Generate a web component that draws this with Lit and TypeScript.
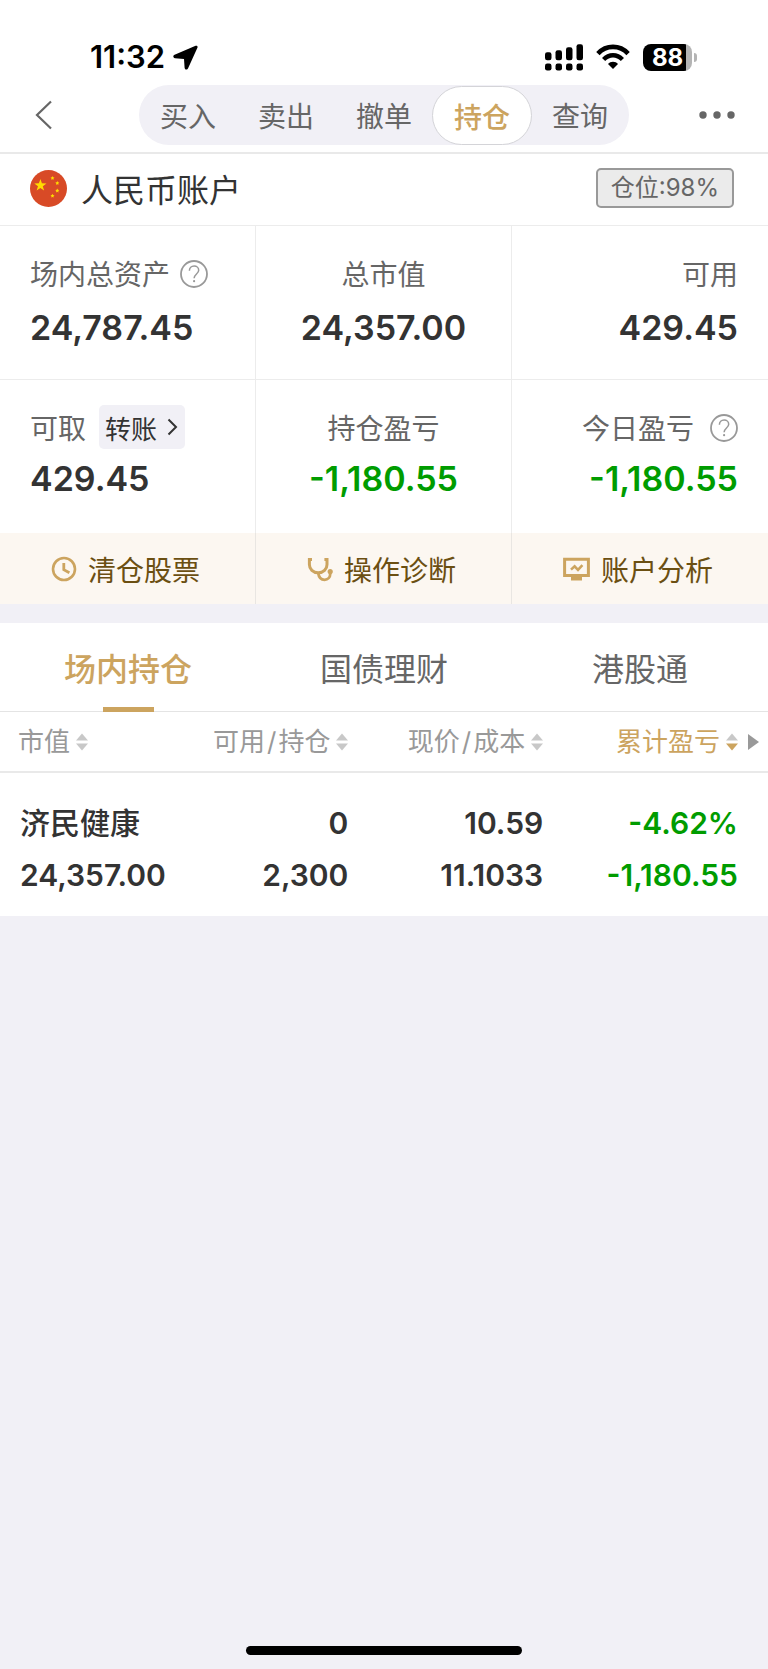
import { LitElement, html, css, svg, nothing } from "lit";
import { customElement, property, state } from "lit/decorators.js";
import { classMap } from "lit/directives/class-map.js";

const helpIcon = html`<svg class="help" width="28" height="28" viewBox="0 0 28 28" fill="none" aria-hidden="true">
  <circle cx="14" cy="14" r="13" stroke="#999" stroke-width="1.8" />
  <path d="M9.4 10.8c0-2.8 2-4.7 4.7-4.7 2.7 0 4.6 1.8 4.6 4.2 0 3.6-4.6 3.9-4.6 8" stroke="#999" stroke-width="1.5" />
  <circle cx="14.1" cy="21.2" r="1.1" fill="#999" />
</svg>`;

const clockIcon = html`<svg width="26" height="26" viewBox="0 0 26 26" fill="none" stroke="#cca45f" aria-hidden="true">
  <circle cx="13" cy="13" r="11" stroke-width="2.6" />
  <path d="M12.8 7v6.7l5.6 3" stroke-width="2.8" />
</svg>`;

const scopeIcon = html`<svg width="26" height="26" viewBox="0 0 26 26" fill="none" stroke="#cca45f" aria-hidden="true">
  <path d="M5 3.500H2.400v5c0 4.700 3.600 8.300 8.800 8.300S20 13.200 20 8.500v-5h-2.600" stroke-width="3" />
  <path d="M11.200 17c.6 4.200 3 6.800 6.400 6.800 3.300 0 5.600-2.500 5.600-5.800v-2" stroke-width="2.800" />
  <circle cx="23.200" cy="15.600" r="2.600" fill="#cca45f" stroke="none" />
</svg>`;

const screenIcon = html`<svg width="27" height="26" viewBox="0 0 27 26" fill="none" stroke="#cca45f" aria-hidden="true">
  <path d="M1.600 3.200h23.800v16.400H1.600z" stroke-width="3" />
  <path d="M8 20.500h11v4H8z" fill="#cca45f" stroke="none" />
  <path d="M8 13.600l3.600-3.200 3.400 3.400 4.400-4.600" stroke-width="2.600" />
</svg>`;

const flagIcon = html`<svg width="37" height="37" viewBox="0 0 37 37" aria-hidden="true">
  <circle cx="18.500" cy="18.500" r="18.500" fill="#d84a26" />
  <g fill="#ffdc00">
    <path d="M10.400 9l1.500 4.300 4.600.1-3.700 2.800 1.300 4.400-3.700-2.600-3.800 2.600 1.400-4.400-3.700-2.800 4.600-.1z" />
    <path d="M22.500 6l.6 1.200 1.400.2-1 1 .2 1.400-1.200-.6-1.300.6.3-1.400-1-1 1.400-.2z" />
    <path d="M27.300 11l.6 1.200 1.400.2-1 1 .2 1.400-1.200-.6-1.300.6.3-1.400-1-1 1.400-.2z" />
    <path d="M27.300 18.600l.6 1.200 1.400.2-1 1 .2 1.400-1.200-.6-1.300.6.3-1.400-1-1 1.400-.2z" />
    <path d="M22.500 23.700l.6 1.200 1.400.2-1 1 .2 1.400-1.200-.6-1.300.6.3-1.400-1-1 1.400-.2z" />
  </g>
</svg>`;

@customElement("status-bar")
export class StatusBar extends LitElement {
  static styles = css`
    :host {
      display: flex;
      justify-content: space-between;
      align-items: center;
      height: 28px;
      padding: 43px 71px 14px 90px;
      color: #000;
    }
    .side {
      display: flex;
      align-items: center;
    }
    .time {
      font-size: 31px;
      font-weight: 600;
      line-height: 28px;
      margin-right: 8px;
    }
    .signal {
      margin-right: 13px;
    }
    .wifi {
      margin-right: 13px;
    }
    .battery {
      display: flex;
      align-items: center;
      gap: 2px;
    }
    .cell {
      width: 49px;
      height: 27px;
      border-radius: 8px;
      background: linear-gradient(to right, #000 88%, #b4b4b4 88%);
      color: #fff;
      font-size: 24px;
      font-weight: 700;
      line-height: 27px;
      text-align: center;
    }
    .nub {
      width: 3px;
      height: 9px;
      border-radius: 0 4px 4px 0;
      background: #b4b4b4;
    }
  `;

  render() {
    const bars = [8, 10, 13, 16];
    return html`
      <div class="side">
        <span class="time">11:32</span>
        <svg width="25" height="25" viewBox="0 0 25 25" aria-hidden="true">
          <path d="M22.600.8 1.600 9.700C-.3 10.600 0 13 2 13.200l9 .7.600 8.800c.2 2.200 2.700 2.500 3.500.6L24.400 2.800c.6-1.400-.4-2.500-1.800-2z" />
        </svg>
      </div>
      <div class="side">
        <svg class="signal" width="38" height="27" viewBox="0 0 38 27" aria-hidden="true">
          ${bars.map(
            (h, i) => svg`<rect x=${i * 10.5} y=${16.300 - h} width="6.500" height=${h} rx="2.200" />
              <rect x=${i * 10.5} y="19.500" width="6.500" height="7" rx="2.200" />`
          )}
        </svg>
        <svg class="wifi" width="34" height="26" viewBox="0 0 34 26" fill="none" stroke="#000" aria-hidden="true">
          <path d="M1.900 9.600C6 5.200 11.300 2.900 17 2.900S28 5.200 32.100 9.600" stroke-width="4.600" />
          <path d="M7.600 15.500c2.600-2.700 5.800-4.200 9.400-4.200s6.800 1.500 9.400 4.200" stroke-width="4.400" />
          <path d="M17 25l-5-5.100c1.300-1.300 3-2.100 5-2.100s3.700.8 5 2.100z" fill="#000" stroke="none" />
        </svg>
        <div class="battery"><span class="cell">88</span><span class="nub"></span></div>
      </div>
    `;
  }
}

@customElement("sort-mark")
export class SortMark extends LitElement {
  @property() direction = "";
  static styles = css`
    :host {
      display: block;
      width: 12px;
      height: 18px;
    }
    svg {
      display: block;
    }
  `;
  render() {
    return html`<svg width="12" height="18" viewBox="0 0 12 18" aria-hidden="true">
      <path d="M6 .5 12 7.500H0z" fill="#c8c8c8" />
      <path d="M0 10.500h12L6 17.500z" fill=${this.direction === "down" ? "#cca45f" : "#c8c8c8"} />
    </svg>`;
  }
}

interface Stat {
  label: string;
  value: string;
  help?: boolean;
  transfer?: boolean;
  fall?: boolean;
}

@customElement("app-root")
export class AppRoot extends LitElement {
  @state() private mode = "持仓";
  @state() private tab = "场内持仓";

  private modes = ["买入", "卖出", "撤单", "持仓", "查询"];
  private tabs = ["场内持仓", "国债理财", "港股通"];
  private totals: Stat[] = [
    { label: "场内总资产", value: "24,787.45", help: true },
    { label: "总市值", value: "24,357.00" },
    { label: "可用", value: "429.45" },
  ];
  private gains: Stat[] = [
    { label: "可取", value: "429.45", transfer: true },
    { label: "持仓盈亏", value: "-1,180.55", fall: true },
    { label: "今日盈亏", value: "-1,180.55", help: true, fall: true },
  ];
  private actions = [
    { label: "清仓股票", icon: clockIcon },
    { label: "操作诊断", icon: scopeIcon },
    { label: "账户分析", icon: screenIcon },
  ];
  private columns = [["市值"], ["可用", "持仓"], ["现价", "成本"], ["累计盈亏"]];

  static styles = css`
    :host {
      display: flex;
      flex-direction: column;
      min-height: 100vh;
      background: #f1f0f6;
      color: #333;
      font-family: Inter, "Noto Sans CJK SC", sans-serif;
    }
    button {
      font: inherit;
      color: inherit;
      background: none;
      border: 0;
      padding: 0;
      margin: 0;
      cursor: pointer;
    }
    svg {
      display: block;
      flex: none;
    }
    header,
    section {
      background: #fff;
    }
    .nav {
      display: grid;
      grid-template-columns: 1fr auto 1fr;
      align-items: center;
      padding: 0 32px 7px;
      border-bottom: 2px solid #e9e9e9;
    }
    .more {
      justify-self: end;
    }
    .modes {
      display: flex;
      height: 60px;
      border-radius: 30px;
      background: #f1f0f6;
      color: #666;
      font-size: 28px;
    }
    .mode {
      padding: 0 21px;
    }
    .mode.on {
      margin: 1px -1px 0;
      border: 1px solid #d4d4d8;
      border-radius: 30px;
      background: #fff;
      color: #cca45f;
      font-weight: 500;
    }
    .account {
      display: flex;
      align-items: center;
      height: 68px;
      padding: 0 34px 3px 30px;
      border-bottom: 1px solid #ececec;
    }
    .account h1 {
      flex: 1;
      margin: 5px 0 0 14px;
      font-size: 32px;
      font-weight: 400;
      line-height: 40px;
    }
    .ratio {
      padding: 0 13px;
      border: 2px solid #999;
      border-radius: 5px;
      background: #ebebeb;
      color: #666;
      font-size: 24px;
      line-height: 36px;
    }
    .stats {
      display: grid;
      grid-template-columns: repeat(3, 1fr);
    }
    .stat {
      display: flex;
      flex-direction: column;
      gap: 13px;
      padding: 25px 30px 31px;
      border-right: 1px solid #ececec;
      border-bottom: 1px solid #ececec;
    }
    .gains .stat {
      gap: 10px;
      padding-bottom: 34px;
      border-bottom: 0;
    }
    .stat:nth-child(2) {
      align-items: center;
    }
    .stat:nth-child(3) {
      align-items: flex-end;
      border-right: 0;
    }
    .label {
      display: flex;
      align-items: center;
      height: 44px;
      color: #666;
      font-size: 28px;
    }
    .label .help {
      margin: 2px 0 0 10px;
    }
    .stat:nth-child(3) .label .help {
      margin-left: 16px;
    }
    .value {
      font-size: 34px;
      font-weight: 600;
      line-height: 40px;
    }
    .fall {
      color: #009c00;
    }
    .transfer {
      display: flex;
      align-items: center;
      gap: 8px;
      height: 44px;
      margin-left: 13px;
      padding: 0 6px;
      border-radius: 5px;
      background: #f1f0f6;
      color: #333;
      font-size: 26px;
    }
    .actions {
      display: grid;
      grid-template-columns: repeat(3, 1fr);
      margin-bottom: 19px;
      background: #fcf7f1;
    }
    .action {
      display: flex;
      align-items: center;
      justify-content: center;
      gap: 11px;
      height: 71px;
      padding-right: 4px;
      border-right: 1px solid #e9e6e2;
      color: #6b4f12;
      font-size: 28px;
    }
    .action:last-child {
      border-right: 0;
    }
    .tabs {
      display: grid;
      grid-template-columns: repeat(3, 1fr);
      border-bottom: 1px solid #e4e4e4;
    }
    .tab {
      display: flex;
      flex-direction: column;
      align-items: center;
      margin-bottom: -1px;
      padding-top: 10px;
      color: #666;
      font-size: 32px;
      line-height: 74px;
    }
    .tab::after {
      content: "";
      width: 51px;
      height: 5px;
    }
    .tab.on {
      color: #cca45f;
      font-weight: 500;
    }
    .tab.on::after {
      background: #cca45f;
    }
    table {
      width: 100%;
      table-layout: fixed;
      border-collapse: collapse;
      font-size: 30px;
      font-weight: 600;
      line-height: 36px;
      text-align: right;
    }
    th,
    td {
      padding: 0;
    }
    .first {
      width: 20%;
      text-align: left;
      padding-left: 20px;
      box-sizing: border-box;
    }
    th.first {
      padding-left: 18px;
    }
    .scroll {
      width: 30px;
    }
    thead th {
      height: 59px;
      border-bottom: 2px solid #e9e9e9;
      color: #999;
      font-size: 26px;
      font-weight: 400;
    }
    .sort {
      display: inline-flex;
      align-items: center;
      gap: 6px;
      vertical-align: middle;
      white-space: nowrap;
    }
    .sort.on {
      color: #cca45f;
    }
    .slash {
      padding: 0 2px;
    }
    .next {
      display: block;
      padding-left: 10px;
    }
    .upper td {
      padding-top: 32px;
      padding-bottom: 16px;
    }
    .lower td {
      padding-bottom: 23px;
    }
    .name {
      font-weight: 500;
    }
    .home {
      align-self: center;
      width: 36%;
      height: 9px;
      margin: auto 0 14px;
      border-radius: 5px;
      background: #000;
    }
  `;

  private renderStat(s: Stat) {
    return html`<div class="stat">
      <div class="label">
        ${s.label}${s.help ? helpIcon : nothing}
        ${s.transfer
          ? html`<button class="transfer">
              转账<svg width="14" height="18" viewBox="0 0 14 18" fill="none" aria-hidden="true">
                <path d="M3.500 1.500 11 9l-7.500 7.500" stroke="#333" stroke-width="2" />
              </svg>
            </button>`
          : nothing}
      </div>
      <div class=${classMap({ value: true, fall: !!s.fall })}>${s.value}</div>
    </div>`;
  }

  render() {
    return html`
      <header>
        <status-bar></status-bar>
        <nav class="nav">
          <button class="back" aria-label="返回">
            <svg width="22" height="30" viewBox="0 0 22 30" fill="none" aria-hidden="true">
              <path d="M19 1.500 5 15l14 13.500" stroke="#666" stroke-width="2.200" />
            </svg>
          </button>
          <div class="modes">
            ${this.modes.map(
              (m) => html`<button class=${classMap({ mode: true, on: m === this.mode })} @click=${() => (this.mode = m)}>${m}</button>`
            )}
          </div>
          <button class="more" aria-label="更多">
            <svg width="38" height="8" viewBox="0 0 38 8" fill="#666" aria-hidden="true">
              <circle cx="5" cy="4" r="3.700" /><circle cx="19" cy="4" r="3.700" /><circle cx="33" cy="4" r="3.700" />
            </svg>
          </button>
        </nav>
      </header>
      <section>
        <div class="account">
          ${flagIcon}
          <h1>人民币账户</h1>
          <span class="ratio">仓位:98%</span>
        </div>
        <div class="stats">${this.totals.map((s) => this.renderStat(s))}</div>
        <div class="stats gains">${this.gains.map((s) => this.renderStat(s))}</div>
      </section>
      <div class="actions">
        ${this.actions.map((a) => html`<button class="action">${a.icon}${a.label}</button>`)}
      </div>
      <section>
        <div class="tabs" role="tablist">
          ${this.tabs.map(
            (t) => html`<button
              role="tab"
              aria-selected=${t === this.tab ? "true" : "false"}
              class=${classMap({ tab: true, on: t === this.tab })}
              @click=${() => (this.tab = t)}
            >${t}</button>`
          )}
        </div>
        <table>
          <thead>
            <tr>
              ${this.columns.map(
                (c, i) => html`<th class=${classMap({ first: i === 0 })} scope="col">
                  <button class=${classMap({ sort: true, on: i === 3 })}>
                    <span>${c[0]}${c[1] ? html`<span class="slash">/</span>${c[1]}` : nothing}</span>
                    <sort-mark direction=${i === 3 ? "down" : ""}></sort-mark>
                  </button>
                </th>`
              )}
              <th class="scroll">
                <button class="next" aria-label="更多列">
                  <svg width="11" height="16" viewBox="0 0 11 16" aria-hidden="true"><path d="M0 0l11 8-11 8z" fill="#999" /></svg>
                </button>
              </th>
            </tr>
          </thead>
          <tbody>
            <tr class="upper">
              <td class="first name">济民健康</td>
              <td>0</td>
              <td>10.59</td>
              <td class="fall">-4.62%</td>
              <td></td>
            </tr>
            <tr class="lower">
              <td class="first">24,357.00</td>
              <td>2,300</td>
              <td>11.1033</td>
              <td class="fall">-1,180.55</td>
              <td></td>
            </tr>
          </tbody>
        </table>
      </section>
      <div class="home"></div>
    `;
  }
}
